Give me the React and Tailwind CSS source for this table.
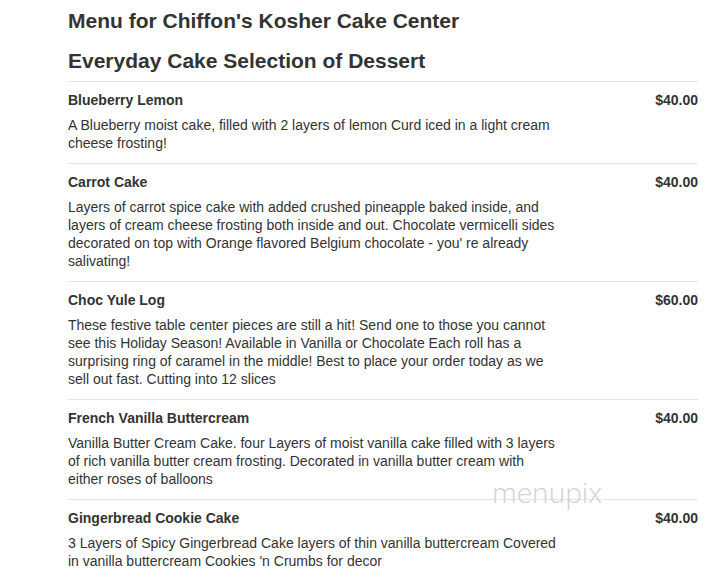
import React from 'react';

const items = [
  {
    name: 'Blueberry Lemon',
    price: '$40.00',
    desc: 'A Blueberry moist cake, filled with 2 layers of lemon Curd iced in a light cream cheese frosting!',
  },
  {
    name: 'Carrot Cake',
    price: '$40.00',
    desc: "Layers of carrot spice cake with added crushed pineapple baked inside, and layers of cream cheese frosting both inside and out. Chocolate vermicelli sides decorated on top with Orange flavored Belgium chocolate - you' re already salivating!",
  },
  {
    name: 'Choc Yule Log',
    price: '$60.00',
    desc: 'These festive table center pieces are still a hit! Send one to those you cannot see this Holiday Season! Available in Vanilla or Chocolate Each roll has a surprising ring of caramel in the middle! Best to place your order today as we sell out fast. Cutting into 12 slices',
  },
  {
    name: 'French Vanilla Buttercream',
    price: '$40.00',
    desc: 'Vanilla Butter Cream Cake. four Layers of moist vanilla cake filled with 3 layers of rich vanilla butter cream frosting. Decorated in vanilla butter cream with either roses of balloons',
  },
  {
    name: 'Gingerbread Cookie Cake',
    price: '$40.00',
    desc: "3 Layers of Spicy Gingerbread Cake layers of thin vanilla buttercream Covered in vanilla buttercream Cookies 'n Crumbs for decor",
  },
];

function MenuItem({ item }) {
  return (
    <div className="border-t border-[#e5e5e5] pt-[8px] pb-[11px]">
      <div className="flex items-start justify-between">
        <div className="text-[14px] font-bold leading-[20px] text-[#333]">{item.name}</div>
        <div className="text-[14px] font-bold leading-[20px] text-[#333]">{item.price}</div>
      </div>
      <p className="mt-[6px] w-[490px] text-[14px] leading-[18px] text-[#333]">{item.desc}</p>
    </div>
  );
}

export default function App() {
  return (
    <div
      className="relative h-[578px] w-[726px] overflow-hidden bg-white"
      style={{ fontFamily: '"Liberation Sans", Arial, sans-serif' }}
    >
      <div className="ml-[68px] w-[630px]">
        <h1 className="pt-[9px] text-[21px] font-bold leading-[24px] text-[#333]">
          Menu for Chiffon's Kosher Cake Center
        </h1>
        <h2 className="mt-[16px] text-[21px] font-bold leading-[24px] text-[#333]">
          Everyday Cake Selection of Dessert
        </h2>
        <div className="mt-[8px]">
          {items.map((item) => (
            <MenuItem key={item.name} item={item} />
          ))}
        </div>
      </div>
      <div
        className="pointer-events-none absolute left-[492px] top-[478px] text-[28px] font-extralight leading-[28px] text-[#d2d2d2]"
        style={{ fontFamily: '"Open Sans", sans-serif' }}
      >
        menupix
      </div>
    </div>
  );
}
